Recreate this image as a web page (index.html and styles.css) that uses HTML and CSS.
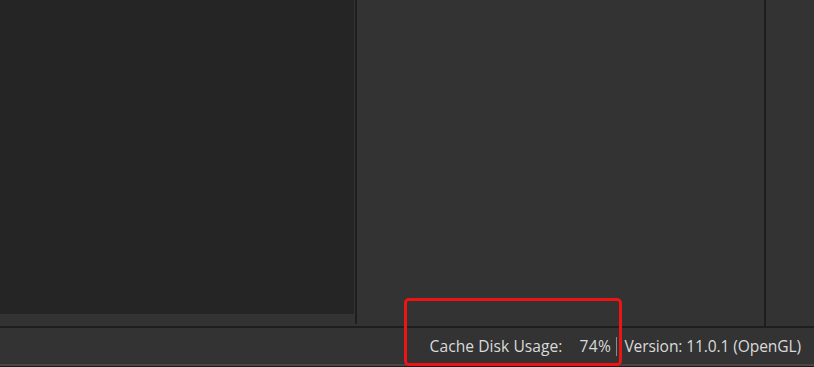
FILE: index.html
```html
<!DOCTYPE html>
<html>
<head>
<meta charset="utf-8">
<link rel="stylesheet" href="styles.css">
</head>
<body>
<div class="app">
  <div class="workspace">
    <div class="left-col">
      <div class="viewer"></div>
      <div class="hscroll"></div>
    </div>
    <div class="splitter"></div>
    <div class="middle"></div>
    <div class="splitter thin"></div>
    <div class="right"></div>
  </div>
  <div class="statusbar">
    <span class="label">Cache Disk Usage:</span>
    <span class="value">74%</span>
    <span class="sep"></span>
    <span class="version">Version: 11.0.1 (OpenGL)</span>
    <div class="highlight"></div>
  </div>
  <div class="bottom-edge"></div>
</div>
</body>
</html>
```
FILE: styles.css
```css
* { box-sizing: border-box; }
html, body { margin: 0; padding: 0; }
body {
  width: 814px;
  height: 367px;
  overflow: hidden;
  background: #1c1c1c;
  font-family: "Open Sans", "Noto Sans", sans-serif;
}
.app {
  display: flex;
  flex-direction: column;
  height: 367px;
}
.workspace {
  display: flex;
  height: 326px;
  background: #333333;
}
.left-col {
  width: 355px;
  display: flex;
  flex-direction: column;
}
.viewer {
  width: 354px;
  height: 314px;
  background: #252525;
}
.hscroll {
  flex: 1;
}
.splitter {
  width: 2px;
  height: 324px;
  background: #1e1e1e;
}
.splitter.thin { height: 326px; }
.middle {
  width: 407px;
}
.right {
  flex: 1;
}
.statusbar {
  position: relative;
  height: 40px;
  border-top: 2px solid #1e1e1e;
  border-bottom: 2px solid #474747;
  background: #333333;
  display: flex;
  align-items: center;
  justify-content: flex-end;
  padding-right: 13px;
  color: #dadada;
  font-size: 15.6px;
}
.label { letter-spacing: 0.05px; }
.value { margin-left: 17px; letter-spacing: 0.4px; }
.version { letter-spacing: -0.12px; }
.sep {
  width: 1px;
  height: 19px;
  background: #8a8a8a;
  margin: 0 7px 0 5px;
}
.highlight {
  position: absolute;
  left: 404px;
  top: -30px;
  width: 218px;
  height: 68px;
  border: 3px solid #ec1414;
  border-radius: 5px;
}
.bottom-edge {
  flex: 1;
  background: #1c1c1c;
}
```
